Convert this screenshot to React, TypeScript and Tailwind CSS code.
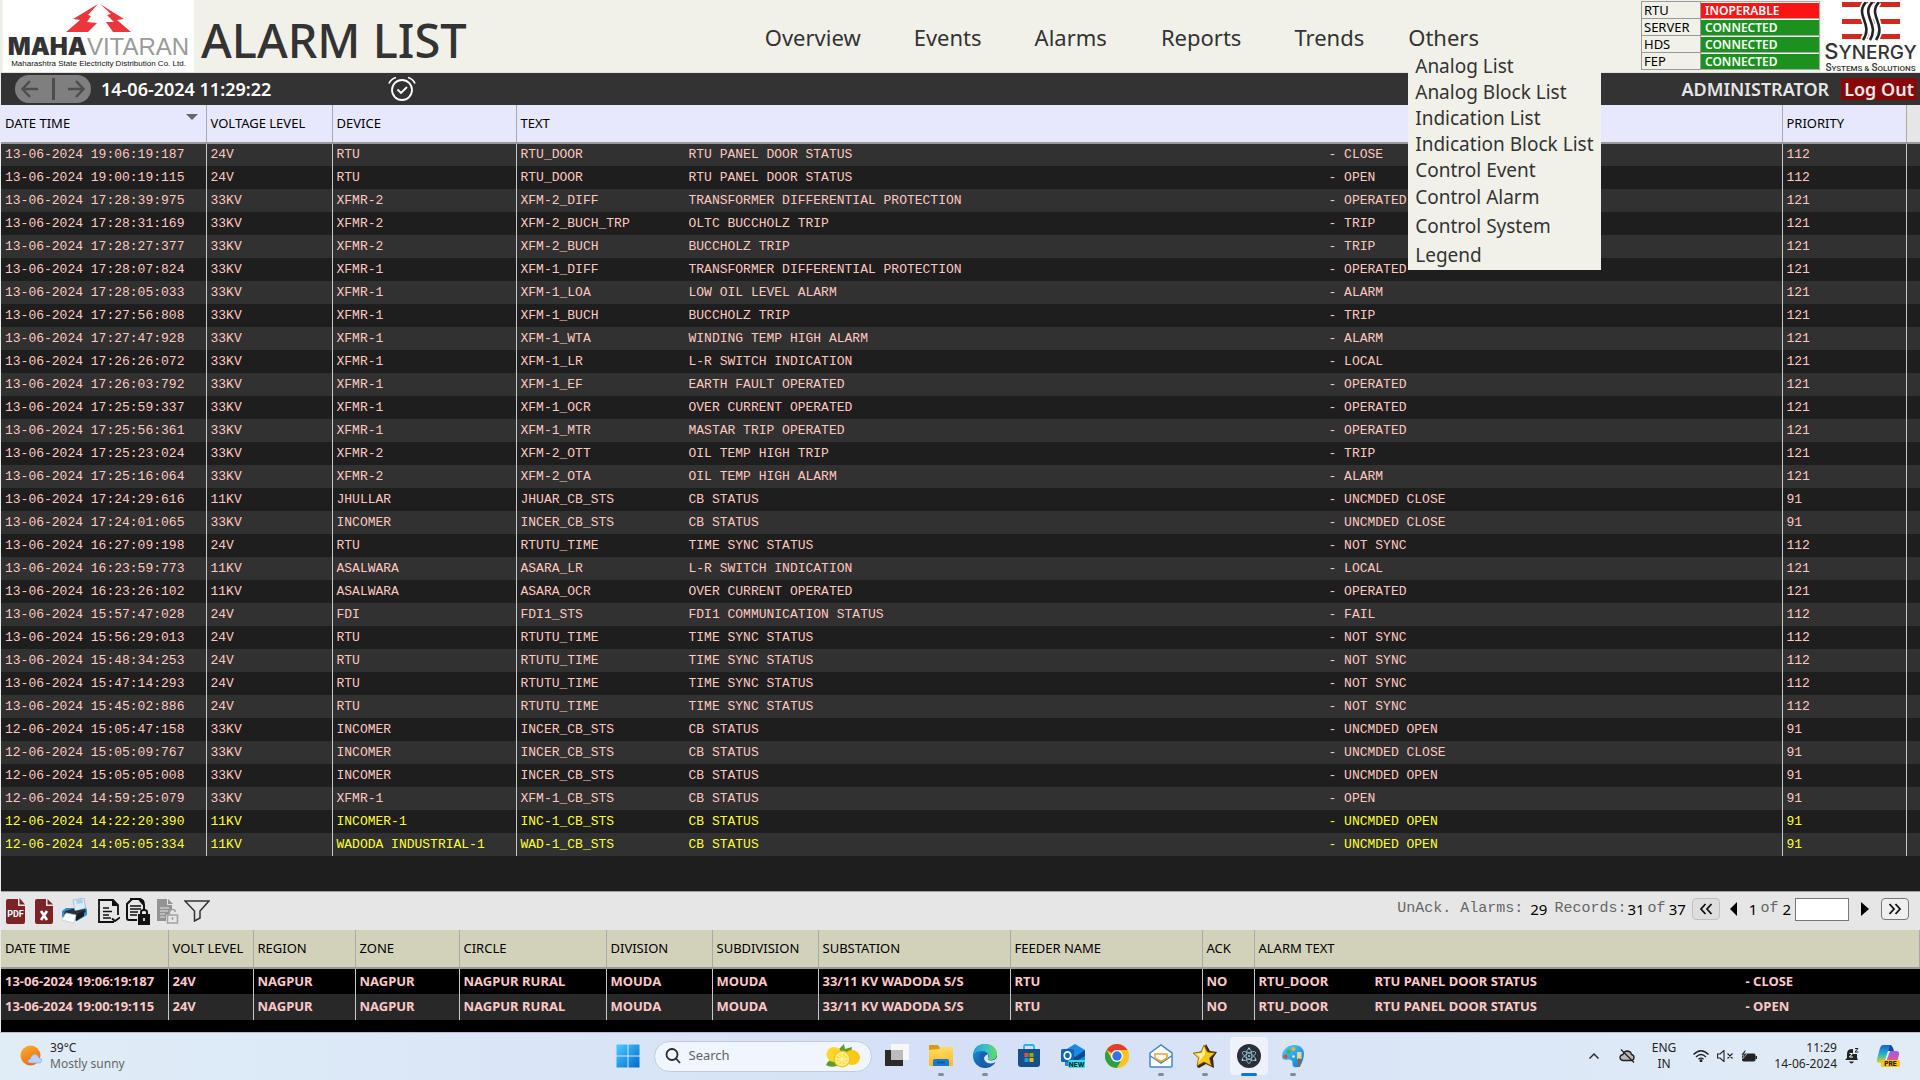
import type { ReactNode } from "react";

type Alarm = [time: string, volt: string, device: string, tag: string, desc: string, state: string, priority: string, open?: boolean];

const alarms: Alarm[] = [
  ["13-06-2024 19:06:19:187", "24V", "RTU", "RTU_DOOR", "RTU PANEL DOOR STATUS", "CLOSE", "112"],
  ["13-06-2024 19:00:19:115", "24V", "RTU", "RTU_DOOR", "RTU PANEL DOOR STATUS", "OPEN", "112"],
  ["13-06-2024 17:28:39:975", "33KV", "XFMR-2", "XFM-2_DIFF", "TRANSFORMER DIFFERENTIAL PROTECTION", "OPERATED", "121"],
  ["13-06-2024 17:28:31:169", "33KV", "XFMR-2", "XFM-2_BUCH_TRP", "OLTC BUCCHOLZ TRIP", "TRIP", "121"],
  ["13-06-2024 17:28:27:377", "33KV", "XFMR-2", "XFM-2_BUCH", "BUCCHOLZ TRIP", "TRIP", "121"],
  ["13-06-2024 17:28:07:824", "33KV", "XFMR-1", "XFM-1_DIFF", "TRANSFORMER DIFFERENTIAL PROTECTION", "OPERATED", "121"],
  ["13-06-2024 17:28:05:033", "33KV", "XFMR-1", "XFM-1_LOA", "LOW OIL LEVEL ALARM", "ALARM", "121"],
  ["13-06-2024 17:27:56:808", "33KV", "XFMR-1", "XFM-1_BUCH", "BUCCHOLZ TRIP", "TRIP", "121"],
  ["13-06-2024 17:27:47:928", "33KV", "XFMR-1", "XFM-1_WTA", "WINDING TEMP HIGH ALARM", "ALARM", "121"],
  ["13-06-2024 17:26:26:072", "33KV", "XFMR-1", "XFM-1_LR", "L-R SWITCH INDICATION", "LOCAL", "121"],
  ["13-06-2024 17:26:03:792", "33KV", "XFMR-1", "XFM-1_EF", "EARTH FAULT OPERATED", "OPERATED", "121"],
  ["13-06-2024 17:25:59:337", "33KV", "XFMR-1", "XFM-1_OCR", "OVER CURRENT OPERATED", "OPERATED", "121"],
  ["13-06-2024 17:25:56:361", "33KV", "XFMR-1", "XFM-1_MTR", "MASTAR TRIP OPERATED", "OPERATED", "121"],
  ["13-06-2024 17:25:23:024", "33KV", "XFMR-2", "XFM-2_OTT", "OIL TEMP HIGH TRIP", "TRIP", "121"],
  ["13-06-2024 17:25:16:064", "33KV", "XFMR-2", "XFM-2_OTA", "OIL TEMP HIGH ALARM", "ALARM", "121"],
  ["13-06-2024 17:24:29:616", "11KV", "JHULLAR", "JHUAR_CB_STS", "CB STATUS", "UNCMDED CLOSE", "91"],
  ["13-06-2024 17:24:01:065", "33KV", "INCOMER", "INCER_CB_STS", "CB STATUS", "UNCMDED CLOSE", "91"],
  ["13-06-2024 16:27:09:198", "24V", "RTU", "RTUTU_TIME", "TIME SYNC STATUS", "NOT SYNC", "112"],
  ["13-06-2024 16:23:59:773", "11KV", "ASALWARA", "ASARA_LR", "L-R SWITCH INDICATION", "LOCAL", "121"],
  ["13-06-2024 16:23:26:102", "11KV", "ASALWARA", "ASARA_OCR", "OVER CURRENT OPERATED", "OPERATED", "121"],
  ["13-06-2024 15:57:47:028", "24V", "FDI", "FDI1_STS", "FDI1 COMMUNICATION STATUS", "FAIL", "112"],
  ["13-06-2024 15:56:29:013", "24V", "RTU", "RTUTU_TIME", "TIME SYNC STATUS", "NOT SYNC", "112"],
  ["13-06-2024 15:48:34:253", "24V", "RTU", "RTUTU_TIME", "TIME SYNC STATUS", "NOT SYNC", "112"],
  ["13-06-2024 15:47:14:293", "24V", "RTU", "RTUTU_TIME", "TIME SYNC STATUS", "NOT SYNC", "112"],
  ["13-06-2024 15:45:02:886", "24V", "RTU", "RTUTU_TIME", "TIME SYNC STATUS", "NOT SYNC", "112"],
  ["12-06-2024 15:05:47:158", "33KV", "INCOMER", "INCER_CB_STS", "CB STATUS", "UNCMDED OPEN", "91"],
  ["12-06-2024 15:05:09:767", "33KV", "INCOMER", "INCER_CB_STS", "CB STATUS", "UNCMDED CLOSE", "91"],
  ["12-06-2024 15:05:05:008", "33KV", "INCOMER", "INCER_CB_STS", "CB STATUS", "UNCMDED OPEN", "91"],
  ["12-06-2024 14:59:25:079", "33KV", "XFMR-1", "XFM-1_CB_STS", "CB STATUS", "OPEN", "91"],
  ["12-06-2024 14:22:20:390", "11KV", "INCOMER-1", "INC-1_CB_STS", "CB STATUS", "UNCMDED OPEN", "91", true],
  ["12-06-2024 14:05:05:334", "11KV", "WADODA INDUSTRIAL-1", "WAD-1_CB_STS", "CB STATUS", "UNCMDED OPEN", "91", true],
];

const recent = [
  ["13-06-2024 19:06:19:187", "CLOSE"],
  ["13-06-2024 19:00:19:115", "OPEN"],
];

const recentCols: [string, string][] = [
  ["DATE TIME", "w-[167px]"],
  ["VOLT LEVEL", "w-[85px]"],
  ["REGION", "w-[102px]"],
  ["ZONE", "w-[104px]"],
  ["CIRCLE", "w-[147px]"],
  ["DIVISION", "w-[106px]"],
  ["SUBDIVISION", "w-[106px]"],
  ["SUBSTATION", "w-[192px]"],
  ["FEEDER NAME", "w-[192px]"],
  ["ACK", "w-[52px]"],
  ["ALARM TEXT", ""],
];

const links: [string, string][] = [
  ["RTU", "INOPERABLE"],
  ["SERVER", "CONNECTED"],
  ["HDS", "CONNECTED"],
  ["FEP", "CONNECTED"],
];

function MahavitaranLogo() {
  return (
    <div className="flex h-[72px] w-[191px] shrink-0 flex-col items-center bg-white pt-1">
      <svg width="66" height="29" viewBox="0 0 66 29" className="shrink-0" fill="#e9373b">
        <path d="M32 0 L7 15 L14 16 L0 28 L22 28 L31 19 L21 18 L25 12 L22 11 Z" />
        <path d="M34 0 L58 15 L51 16 L65 28 L47 28 L40 18 L48 18 L41 11 L45 10 Z" />
      </svg>
      <div className="flex h-[27px] items-center whitespace-nowrap leading-6">
        <span className="font-['Inter'] text-[24px] font-black text-[#333333]">MAHA</span>
        <span className="font-['Liberation_Sans'] text-[24px] text-[#9a9a9a]">VITARAN</span>
      </div>
      <div className="whitespace-nowrap font-['Liberation_Sans'] text-[8px] leading-[8px] text-[#111111]">
        Maharashtra State Electricity Distribution Co. Ltd.
      </div>
    </div>
  );
}

function SynergyLogo() {
  return (
    <div className="flex h-[72px] w-[99px] shrink-0 flex-col items-center bg-white pt-0.5">
      <svg width="58" height="39" viewBox="0 0 58 39" fill="none" className="shrink-0">
        <path d="M0 2.500H58M0 19.500H58M0 34.500H58" stroke="#cf2a20" strokeWidth="5" />
        <path d="M24 0C12 13 32 22 21 38M30.500 0C18 13 38 22 28 38M37 0C25 13 45 22 34 38" stroke="#fff" strokeWidth="6" />
        <path d="M24 0C12 13 32 22 21 38M30.500 0C18 13 38 22 28 38M37 0C25 13 45 22 34 38" stroke="#222" strokeWidth="2.600" />
      </svg>
      <div className="whitespace-nowrap font-['Inter'] text-[19px] font-medium leading-[20px] text-[#333333]">
        <span className="text-[22px]">S</span>YNERGY
      </div>
      <div className="whitespace-nowrap font-['Roboto'] text-[8px] font-medium leading-[9px] text-[#333333]">
        <span className="text-[10px]">S</span>YSTEMS &amp; <span className="text-[10px]">S</span>OLUTIONS
      </div>
    </div>
  );
}

function NavLink({ children, className }: { children: ReactNode; className: string }) {
  return (
    <a href="#" className={`${className} whitespace-nowrap text-[22px] leading-[30px]`}>
      {children}
    </a>
  );
}

function Header() {
  return (
    <header className="relative z-10 flex h-[73px] items-start border-b border-[#e2e2e2] bg-[#f1f1e9] pl-0.5 text-[#333333]">
      <MahavitaranLogo />
      <h1 className="ml-[7px] mt-2 whitespace-nowrap text-[47px] font-medium leading-[65px]">ALARM LIST</h1>
      <nav className="ml-auto mt-[22px] flex">
        <NavLink className="mr-[53px]">Overview</NavLink>
        <NavLink className="mr-[53px]">Events</NavLink>
        <NavLink className="mr-[54px]">Alarms</NavLink>
        <NavLink className="mr-[53px]">Reports</NavLink>
        <NavLink className="mr-11">Trends</NavLink>
        <div className="relative mr-[162px]">
          <NavLink className="">Others</NavLink>
          <ul className="absolute left-0 top-[31px] w-[193px] bg-[#f1f1e9] pl-[7px] text-[19px]">
            {["Analog List", "Analog Block List", "Indication List", "Indication Block List", "Control Event"].map((t) => (
              <li key={t} className="h-[26px] whitespace-nowrap leading-[26px]">
                <a href="#">{t}</a>
              </li>
            ))}
            {["Control Alarm", "Control System", "Legend"].map((t) => (
              <li key={t} className="h-[29px] whitespace-nowrap leading-[29px]">
                <a href="#">{t}</a>
              </li>
            ))}
          </ul>
        </div>
      </nav>
      <table className="mt-px w-[179px] shrink-0 table-fixed border-collapse text-[13px] leading-4 text-black">
        <tbody>
          {links.map(([name, state]) => (
            <tr key={name} className="h-[17px]">
              <th scope="row" className="w-[59px] border border-[#999999] py-0 pl-0.5 text-left font-normal">
                {name}
              </th>
              <td className="border border-[#aaaaaa] p-0 text-[12px] font-semibold text-white">
                <div className={`${state === "INOPERABLE" ? "bg-[#fb1414]" : "bg-[#1b9220]"} h-[15px] pl-1 leading-[15px]`}>{state}</div>
              </td>
            </tr>
          ))}
        </tbody>
      </table>
      <div className="ml-px">
        <SynergyLogo />
      </div>
    </header>
  );
}

function StatusBar() {
  return (
    <div className="flex h-8 shrink-0 items-center bg-[#333333] pl-3.5 pr-[3px] text-[18px] font-semibold text-[#e6e6e6]">
      <div className="flex h-7 w-[76px] items-center justify-between rounded-full bg-[#7f7f7f] px-1.5">
        <button aria-label="Back">
          <svg width="17" height="18" viewBox="0 0 17 18" fill="none" stroke="#4d4d4d" strokeWidth="2.500">
            <path d="M9 1L1.500 9L9 17M1.500 9H17" />
          </svg>
        </button>
        <span className="h-[22px] w-[3px] bg-[#4d4d4d]" />
        <button aria-label="Forward">
          <svg width="17" height="18" viewBox="0 0 17 18" fill="none" stroke="#4d4d4d" strokeWidth="2.500">
            <path d="M8 1L15.500 9L8 17M15.500 9H0" />
          </svg>
        </button>
      </div>
      <time className="ml-2.5 w-[287px] whitespace-nowrap text-white">14-06-2024 11:29:22</time>
      <button aria-label="Acknowledge alarms">
        <svg width="28" height="26" viewBox="0 0 28 26" fill="none" stroke="#fff" strokeWidth="1.800">
          <circle cx="14" cy="14" r="10" />
          <path d="M9.500 13.500L13 17L19 11M1 7.500Q3 3 8 1.500M20 1.500Q25 3 27 7.500" />
        </svg>
      </button>
      <span className="ml-auto mr-3">ADMINISTRATOR</span>
      <button className="h-[22px] whitespace-nowrap bg-[#880808] px-[3px] leading-[22px]">Log Out</button>
    </div>
  );
}

function AlarmTable() {
  const head = "border-r border-[#a9a9a9] p-0 pl-1 text-left font-normal";
  const cell = "border-r border-[#c8c8c8] p-0 pl-1";
  return (
    <main className="flex-1 bg-[#1e1e1e]">
      <table className="w-full table-fixed border-collapse">
        <thead className="text-[13px] text-black">
          <tr className="h-[38px] border-b-2 border-[#999999] bg-[#e7e8fd]">
            <th className={`${head} w-[205px]`} aria-sort="descending">
              <div className="flex justify-between pr-2">
                DATE TIME
                <svg width="12" height="6" viewBox="0 0 12 6">
                  <path d="M0 0H12L6 6Z" fill="#666" />
                </svg>
              </div>
            </th>
            <th className={`${head} w-[126px]`}>VOLTAGE LEVEL</th>
            <th className={`${head} w-[184px]`}>DEVICE</th>
            <th className={head}>TEXT</th>
            <th className={`${head} w-[124px]`}>PRIORITY</th>
            <th className="w-[14px] bg-[#e6e6e6] p-0" aria-label="Scroll" />
          </tr>
        </thead>
        <tbody className="whitespace-pre font-['Liberation_Mono',monospace] text-[13px] leading-[22px]">
          {alarms.map(([time, volt, device, tag, desc, state, priority, open]) => (
            <tr key={time} className={`${open ? "text-[#ffff33]" : "text-[#ffc8c0]"} h-[23px] odd:bg-[#313131]`}>
              <td className={cell}>{time}</td>
              <td className={cell}>{volt}</td>
              <td className={cell}>{device}</td>
              <td className={cell}>
                <div className="flex">
                  <span className="w-[168px]">{tag}</span>
                  <span className="w-[640px]">{desc}</span>
                  <span>- {state}</span>
                </div>
              </td>
              <td className={cell}>{priority}</td>
              <td className="p-0" />
            </tr>
          ))}
        </tbody>
      </table>
    </main>
  );
}

function Toolbar() {
  const mono = "font-['Liberation_Mono',monospace] text-[#666666]";
  return (
    <div className="flex h-[39px] shrink-0 items-center border-t border-[#a0a0a0] bg-[#e6e6e6] pl-[5px] pr-[11px] text-[15px] text-black">
      <button aria-label="Export PDF" className="mr-2.5">
        <svg width="19" height="26" viewBox="0 0 19 26">
          <path d="M2 1H12V8H19V24Q19 26 17 26H2Q0 26 0 24V3Q0 1 2 1ZM13.500 0L19 6.500H13.500Z" fill="#7b2428" />
          <text x="9.500" y="19" textAnchor="middle" fill="#fff" fontFamily="Roboto" fontWeight="700" fontSize="9">PDF</text>
        </svg>
      </button>
      <button aria-label="Export Excel" className="mr-2">
        <svg width="18" height="26" viewBox="0 0 18 26">
          <path d="M2 1H11V8H18V24Q18 26 16 26H2Q0 26 0 24V3Q0 1 2 1ZM12.500 1L18 6.500H12.500Z" fill="#7b2428" />
          <path d="M6 13L12 22M12 13L6 22" stroke="#fff" strokeWidth="2.600" />
        </svg>
      </button>
      <button aria-label="Print" className="mr-2.5">
        <svg width="27" height="26" viewBox="0 0 27 26">
          <path d="M12 2L23 0L25 12L14 14Z" fill="#dcecf6" stroke="#9ab8cc" strokeWidth="0.800" />
          <path d="M15 2L21 1L22 5L16 6Z" fill="#a8d0ea" />
          <path d="M1 13L5 10L13 10V13L25 10L26 12V17L16 23L1 19Z" fill="#2f8fd6" />
          <path d="M4 13L13 10.500L14 13L24 11L25 14L16 18L3 16Z" fill="#2a3039" />
          <path d="M15 17L23 13V18L15 23Z" fill="#181d24" />
          <path d="M5 15L15 17L13 25L1 22Z" fill="#fff" stroke="#b9c9d4" strokeWidth="0.700" />
        </svg>
      </button>
      <button aria-label="Acknowledge page" className="mr-1.5">
        <svg width="22" height="25" viewBox="0 0 22 25" fill="none" stroke="#111" strokeWidth="1.800">
          <path d="M20 16V6L15 1H1V23H16" />
          <path d="M14 0L21 7H14Z" fill="#111" stroke="none" />
          <path d="M5 9H11M5 12.500H14M5 16H11M5 19H13" strokeWidth="1.500" />
          <path d="M14 19.500L17 22L22 18.500" />
        </svg>
      </button>
      <button aria-label="Lock list" className="mr-[7px]">
        <svg width="24" height="27" viewBox="0 0 24 27" fill="none" stroke="#111" strokeWidth="2">
          <path d="M18 12V7L13 1H6L1 6V20Q1 22 3 22H11M4 1H14Q18 2 18 7" />
          <path d="M4 8H15M4 11H15M4 14H12M4 17H11" strokeWidth="1.500" />
          <path d="M13 17H23V26H13Z" fill="#111" />
          <path d="M15 17V14Q15 12 18 12T21 14V17" />
          <path d="M18 20V23" stroke="#fff" strokeWidth="1.500" />
        </svg>
      </button>
      <button aria-label="Unlock list" className="mr-[5px]">
        <svg width="22" height="25" viewBox="0 0 22 25">
          <path d="M0 0H10V6H15V10L12 12V15L9 16V22H0Z" fill="#939393" />
          <path d="M11 0L16 5H11Z" fill="#939393" />
          <path d="M3 9H12M3 12H11M3 15H8M3 18H8" stroke="#e6e6e6" strokeWidth="1.200" />
          <path d="M10.500 16H20.500V24H10.500ZM12.500 16V13Q13 10.500 15.500 10.500T18.500 13" fill="none" stroke="#a2a2a2" strokeWidth="1.600" />
          <path d="M15.500 18V21" stroke="#a2a2a2" strokeWidth="1.500" />
        </svg>
      </button>
      <button aria-label="Filter">
        <svg width="26" height="22" viewBox="0 0 26 22" fill="none" stroke="#333" strokeWidth="1.500">
          <path d="M1 1H25L16 11V18L10.500 21V11Z" />
        </svg>
      </button>

      <div className="mb-1 ml-auto flex items-center whitespace-nowrap">
        <span className={mono}>UnAck. Alarms:</span>
        <span className="ml-[7px]">29</span>
        <span className={`${mono} ml-[7px]`}>Records:</span>
        <span className="ml-px">31</span>
        <span className={`${mono} ml-[3px]`}>of</span>
        <span className="ml-[3px]">37</span>
        <button aria-label="First page" className="ml-1.5 flex h-[22px] w-7 items-center justify-center rounded-sm border border-[#c0c0c0] bg-[#dedede]">
          <svg width="14" height="12" viewBox="0 0 14 12" fill="none" stroke="#111" strokeWidth="1.800">
            <path d="M6.500 1L2 6L6.500 11M12.500 1L8 6L12.500 11" />
          </svg>
        </button>
        <button aria-label="Previous page" className="ml-2.5">
          <svg width="7" height="14" viewBox="0 0 7 14"><path d="M7 0V14L0 7Z" /></svg>
        </button>
        <span className="ml-3">1</span>
        <span className={`${mono} ml-[3px]`}>of</span>
        <span className="ml-1">2</span>
        <input aria-label="Go to page" className="ml-1 h-[23px] w-[54px] border border-[#777777] bg-white px-1" />
        <button aria-label="Next page" className="ml-3">
          <svg width="8" height="14" viewBox="0 0 8 14"><path d="M0 0V14L8 7Z" /></svg>
        </button>
        <button aria-label="Last page" className="ml-3 flex h-[22px] w-7 items-center justify-center rounded-sm border border-[#777777] bg-[#efefef]">
          <svg width="14" height="12" viewBox="0 0 14 12" fill="none" stroke="#111" strokeWidth="1.800">
            <path d="M1.500 1L6 6L1.500 11M7.500 1L12 6L7.500 11" />
          </svg>
        </button>
      </div>
    </div>
  );
}

function RecentTable() {
  return (
    <section className="h-[102px] shrink-0 bg-black">
      <table className="w-full table-fixed border-collapse text-[13px]">
        <thead className="text-black">
          <tr className="h-[38px] border-b-2 border-[#999999] bg-[#d2d2bb]">
            {recentCols.map(([name, width]) => (
              <th key={name} className={`${width} border-r border-[#a9a9a9] p-0 pl-1 text-left font-normal`}>
                {name}
              </th>
            ))}
          </tr>
        </thead>
        <tbody className="whitespace-nowrap font-bold text-[#ffc8c8]">
          {recent.map(([time, state]) => (
            <tr key={time} className="h-[26px] even:bg-[#282828]">
              {[time, "24V", "NAGPUR", "NAGPUR", "NAGPUR RURAL", "MOUDA", "MOUDA", "33/11 KV WADODA S/S", "RTU", "NO"].map((value, i) => (
                <td key={i} className="border-r border-[#c8c8c8] p-0 pl-1">
                  {value}
                </td>
              ))}
              <td className="p-0 pl-1">
                <div className="flex">
                  <span className="w-[116px]">RTU_DOOR</span>
                  <span className="w-[371px]">RTU PANEL DOOR STATUS</span>
                  <span>- {state}</span>
                </div>
              </td>
            </tr>
          ))}
        </tbody>
      </table>
    </section>
  );
}

function TaskButton({ label, running, active, children }: { label: string; running?: boolean; active?: boolean; children: ReactNode }) {
  return (
    <button aria-label={label} className="relative flex h-[46px] w-11 items-center justify-center">
      {active && <span className="absolute inset-x-[3px] inset-y-1 rounded-[4px] bg-[#eef2fb]" />}
      <svg width="24" height="24" viewBox="0 0 24 24" className="relative">
        {children}
      </svg>
      {running && <span className="absolute bottom-[3px] h-[3px] w-1.5 rounded-full bg-[#858a96]" />}
      {active && <span className="absolute bottom-[3px] h-[3px] w-4 rounded-full bg-[#0b78d4]" />}
    </button>
  );
}

function Taskbar() {
  return (
    <footer className="grid h-12 shrink-0 grid-cols-[1fr_auto_1fr] items-center border-t border-[#b9bdc6] bg-linear-to-r from-[#e0edf7] via-[#d5e0f7] to-[#e2ecf7] pb-px text-[12px] text-[#1f1f1f]">
      <svg width="0" height="0" className="absolute">
        <defs>
          <linearGradient id="win" x1="0" y1="0" x2="1" y2="1"><stop stopColor="#4ccbff" /><stop offset="1" stopColor="#0069cf" /></linearGradient>
          <linearGradient id="sun" x1="0" y1="0" x2="0.500" y2="1"><stop stopColor="#f9b62b" /><stop offset="1" stopColor="#ee6a12" /></linearGradient>
          <linearGradient id="folder" x1="0" y1="0" x2="0" y2="1"><stop stopColor="#ffdc63" /><stop offset="1" stopColor="#fbb826" /></linearGradient>
          <linearGradient id="edgeTop" x1="0" y1="0" x2="1" y2="0"><stop stopColor="#1f9fd8" /><stop offset="0.500" stopColor="#35c1c8" /><stop offset="1" stopColor="#6bdc50" /></linearGradient>
          <linearGradient id="edgeLow" x1="0" y1="0" x2="1" y2="1"><stop stopColor="#1b94de" /><stop offset="1" stopColor="#0f3f86" /></linearGradient>
          <linearGradient id="copA" x1="0" y1="0" x2="0" y2="1"><stop stopColor="#1b62d8" /><stop offset="0.500" stopColor="#22b2c8" /><stop offset="1" stopColor="#e8d429" /></linearGradient>
          <linearGradient id="copB" x1="0" y1="0" x2="0" y2="1"><stop stopColor="#9a5cf0" /><stop offset="1" stopColor="#f2567a" /></linearGradient>
          <linearGradient id="paint" x1="0" y1="0" x2="1" y2="1"><stop stopColor="#46d1fa" /><stop offset="1" stopColor="#1776d0" /></linearGradient>
        </defs>
      </svg>
      <button className="ml-5 flex items-center gap-2 justify-self-start text-left leading-4">
        <svg width="22" height="22" viewBox="0 0 22 22">
          <circle cx="10.500" cy="10.500" r="10" fill="url(#sun)" />
          <path d="M10 18Q7.500 18 8 15.500Q8.500 14 10.500 14Q11 9.500 15 9.500Q18 9.500 19 13Q22 13.500 22 16Q21.500 18 19 18Z" fill="#bcd2f7" stroke="#88aeea" strokeWidth="0.700" />
        </svg>
        <span>
          39°C
          <span className="block text-[#666666]">Mostly sunny</span>
        </span>
      </button>

      <div className="flex items-center">
        <TaskButton label="Start">
          <path d="M0.500 0.500H11.500V11.500H0.500ZM12.500 0.500H23.500V11.500H12.500ZM0.500 12.500H11.500V23.500H0.500ZM12.500 12.500H23.500V23.500H12.500Z" fill="url(#win)" />
        </TaskButton>
        <label className="ml-1 mr-[3px] flex h-[31px] w-[218px] items-center rounded-full border border-[#c3cbe0] bg-[#f1f5fd] px-2.5">
          <svg width="16" height="16" viewBox="0 0 16 16" fill="none" stroke="#2b2b2b" strokeWidth="1.800">
            <circle cx="7" cy="6.500" r="5.500" />
            <path d="M11 10.500L15 15" />
          </svg>
          <input type="search" placeholder="Search" className="ml-2 w-0 min-w-0 flex-1 bg-transparent text-[13px] outline-none placeholder:text-[#5f6368]" />
          <svg width="36" height="24" viewBox="0 0 36 24">
            <path d="M1 21Q3 15 11 15L12 22Q5 24 1 21ZM14 5L19 0L20 5L27 3L26 9L16 9Z" fill="#5d9c2c" />
            <circle cx="9" cy="10.500" r="7.500" fill="#ffd62b" />
            <ellipse cx="27" cy="13.500" rx="8" ry="7.500" fill="#fbc816" />
            <circle cx="17" cy="15" r="8.500" fill="#f6c51b" />
            <circle cx="17" cy="15" r="7" fill="#fff4a8" />
            <circle cx="17" cy="15" r="6" fill="#ffe14a" />
            <path d="M17 9V21M11 15H23M13 11L21 19M21 11L13 19" stroke="#fff7c2" strokeWidth="0.900" />
          </svg>
        </label>
        <TaskButton label="Task view">
          <rect x="6" y="0" width="18" height="16" fill="#f7f7f7" />
          <rect x="0" y="6" width="18" height="16" fill="#2b2b2b" />
          <rect x="6" y="6" width="12" height="10" fill="#bcbcbc" />
        </TaskButton>
        <TaskButton label="File Explorer" running>
          <path d="M0 2Q0 1 1 1H9L11 4H24V9H0Z" fill="#dc9a10" />
          <path d="M0 6L10 5L12 3H23Q24 3 24 4V21Q24 22 23 22H1Q0 22 0 21Z" fill="url(#folder)" />
          <path d="M4 22V17Q4 15 6 15H18Q20 15 20 17V22Z" fill="#1679cf" />
          <path d="M8 18.500H16" stroke="#0c5298" strokeWidth="1.500" />
        </TaskButton>
        <TaskButton label="Edge" running>
          <circle cx="12" cy="12" r="12" fill="url(#edgeLow)" />
          <path d="M0 11Q1 0 12 0Q23 0 24 10Q24 15.500 18 16Q14.500 16 14.500 14Q16 13.500 15.500 11Q14 7 9 7Q3 7 0 11Z" fill="url(#edgeTop)" />
          <path d="M15 10Q10 11 10.500 15Q12 20 18 20Q21 20 23 18Q24 17 24 13Q22 16.500 18 16.500Q14 16 15 14Z" fill="#dbe4f6" />
          <path d="M8 9Q5 13 8 18Q11 23.500 17 22.500Q21 21 22.500 18Q16 21.500 12 17Q9 13 15 10Q12 7.500 8 9Z" fill="#1a5fae" />
        </TaskButton>
        <TaskButton label="Microsoft Store">
          <path d="M7 6V2.500Q7 1 8.500 1H15.500Q17 1 17 2.500V6" fill="none" stroke="#23b3ee" strokeWidth="1.800" />
          <path d="M1 5H23V20Q23 23 20 23H4Q1 23 1 20Z" fill="#174f8c" />
          <path d="M7.500 9H11.500V13H7.500Z" fill="#f25022" /><path d="M12.500 9H16.500V13H12.500Z" fill="#7fba00" />
          <path d="M7.500 14H11.500V18H7.500Z" fill="#00a4ef" /><path d="M12.500 14H16.500V18H12.500Z" fill="#ffb900" />
        </TaskButton>
        <TaskButton label="Outlook">
          <path d="M4 6L14 0L24 6V22H4Z" fill="#1d8ae0" />
          <path d="M4 6L14 13L24 6V12L14 18Z" fill="#0d4a94" />
          <rect x="0" y="5" width="13" height="13" rx="1.500" fill="#0f62bd" />
          <ellipse cx="6.500" cy="11.500" rx="3.200" ry="3.600" fill="none" stroke="#fff" strokeWidth="1.800" />
          <rect x="7.500" y="16" width="16.500" height="8" fill="#38e0e4" />
          <text x="15.700" y="22.700" textAnchor="middle" fontFamily="Inter" fontWeight="800" fontSize="6.500" fill="#08303a">NEW</text>
        </TaskButton>
        <TaskButton label="Chrome">
          <circle cx="12" cy="12" r="12" fill="#f9c71b" />
          <path d="M12 12L1.600 6A12 12 0 0 1 22.400 6H12Z" fill="#e33b2e" />
          <path d="M1.600 6A12 12 0 0 0 12 24L17.200 15L12 12L6.800 15Z" fill="#2c9f48" />
          <path d="M12 6H22.400A12 12 0 0 1 12 24L17.200 15Z" fill="#f9c71b" />
          <circle cx="12" cy="12" r="6" fill="#fff" /><circle cx="12" cy="12" r="4.700" fill="#2f74e8" />
        </TaskButton>
        <TaskButton label="Mail" running>
          <path d="M1 9L12 1L23 9V22Q23 23 22 23H2Q1 23 1 22Z" fill="#fff" stroke="#3f87c9" strokeWidth="1.500" />
          <path d="M1.500 12L12 19L22.500 12" fill="none" stroke="#3f87c9" strokeWidth="1.500" />
          <path d="M6 14V10H18V14L12 17.500Z" fill="#fff" stroke="#f0a52c" strokeWidth="1.600" />
        </TaskButton>
        <TaskButton label="Star" running>
          <path d="M13 0L17 7L24 8L20 14L21 24L13 20L6 24L4 23L7 15L2 9L10 7Z" fill="#3b2b14" />
          <path d="M11 1L14.500 8L22 9L16.500 14L18.500 22L11 18L4 22L5.500 14L0 9L8 8Z" fill="#f9c922" stroke="#7a5207" strokeWidth="0.700" />
          <path d="M11 3L12 10L5 19L7 13L3 10L9 9Z" fill="#fff3a0" />
        </TaskButton>
        <TaskButton label="SCADA client" active>
          <circle cx="12" cy="12" r="12" fill="#2b2e3a" />
          <g fill="none" stroke="#a7dfe6" strokeWidth="0.700">
            <ellipse cx="12" cy="12" rx="7.500" ry="2.800" transform="rotate(30 12 12)" />
            <ellipse cx="12" cy="12" rx="7.500" ry="2.800" transform="rotate(-30 12 12)" />
            <ellipse cx="12" cy="12" rx="7.500" ry="2.800" transform="rotate(90 12 12)" />
          </g>
          <circle cx="12" cy="12" r="1" fill="#a7dfe6" /><circle cx="5.500" cy="16" r="1" fill="#a7dfe6" /><circle cx="18.500" cy="16" r="1" fill="#a7dfe6" /><circle cx="12" cy="4.500" r="1" fill="#a7dfe6" />
        </TaskButton>
        <TaskButton label="Paint" running>
          <path d="M13 1Q22 1 23 9Q23 16 19 22Q16 24 13 23Q11 22 11.500 18Q11 15 7 15.500Q1 17 1 12Q2 2 13 1Z" fill="url(#paint)" />
          <circle cx="4.500" cy="12.500" r="2" fill="#e5482e" /><circle cx="7.500" cy="7.500" r="2" fill="#4fae3a" /><circle cx="12.500" cy="5" r="2" fill="#f4b41c" />
          <circle cx="12.500" cy="12.500" r="1.300" fill="#e6f6ff" />
          <path d="M16 8H20.500V15H16Z" fill="#e9d3a4" /><path d="M17 14.500H19.500L19.200 23H17.300Z" fill="#a35c22" />
        </TaskButton>
      </div>

      <div className="flex items-center justify-self-end pr-5 leading-4">
        <button aria-label="Show hidden icons" className="mr-5">
          <svg width="10" height="6" viewBox="0 0 10 6" fill="none" stroke="#222" strokeWidth="1.400"><path d="M0.500 5.500L5 1L9.500 5.500" /></svg>
        </button>
        <button aria-label="OneDrive" className="mr-[17px]">
          <svg width="16" height="14" viewBox="0 0 16 14" fill="#b8b8b8" stroke="#222" strokeWidth="1.300">
            <path d="M4 11.500Q1 11 1 8.500Q1 6 4 5.500Q5 2 8.500 2Q12 2.500 12.500 5.500Q15 6 15 8.500Q15 11.500 12 11.500Z" />
            <path d="M2 0.500L15 13.500" />
          </svg>
        </button>
        <button className="mr-[17px] text-center">ENG<br />IN</button>
        <button aria-label="Network, sound and battery" className="mr-[17px] flex items-center gap-2">
          <svg width="16" height="12" viewBox="0 0 16 12" fill="none" stroke="#222" strokeWidth="1.300">
            <path d="M0.500 4.500Q8 -3 15.500 4.500M3 7Q8 2 13 7M5.500 9.300Q8 7 10.500 9.300" /><circle cx="8" cy="10.800" r="0.800" fill="#222" />
          </svg>
          <svg width="16" height="12" viewBox="0 0 16 12" fill="none" stroke="#222" strokeWidth="1.100">
            <path d="M0.500 4V8H3L7 11.500V0.500L3 4ZM10.500 3.500L15.500 8.500M15.500 3.500L10.500 8.500" />
          </svg>
          <svg width="16" height="12" viewBox="0 0 16 12">
            <path d="M2 4H13Q14 4 14 5V10Q14 11 13 11H2.500Q1.500 11 1.500 10V7Z" fill="#222" stroke="#222" /><path d="M14.500 6H16V9H14.500Z" fill="#222" />
            <path d="M4 0L0 5H3L1.500 9L6 4H3.500L5 0Z" fill="#222" stroke="#e2ecf7" strokeWidth="0.500" />
          </svg>
        </button>
        <button className="mr-2 text-right">11:29<br />14-06-2024</button>
        <button aria-label="Notifications" className="mr-[17px]">
          <svg width="14" height="16" viewBox="0 0 14 16" fill="#222">
            <path d="M2 6Q2 1 7 1H8V6H12V10L13 12H0L2 10Z" /><path d="M4 13.500H9Q8 15.500 6.500 15.500T4 13.500Z" />
            <path d="M10 0.500H13L10 4H13.500" fill="none" stroke="#222" /><path d="M4.500 5.500H7.500L4.500 9H8" fill="none" stroke="#fff" />
          </svg>
        </button>
        <button aria-label="Copilot">
          <svg width="24" height="24" viewBox="0 0 24 24">
            <path d="M7 1H15L12 7L8 19H3Q0 19 1 15L4 4Q5 1 7 1Z" fill="url(#copA)" />
            <path d="M14 1Q16 1 17 4L18 7H12Z" fill="#1546b0" />
            <path d="M14 7H20Q24 7 23 11L21 18H10Z" fill="url(#copB)" />
            <rect x="5" y="16" width="19" height="7" rx="1.500" fill="#fdc412" />
            <text x="14.500" y="22" textAnchor="middle" fontFamily="Inter" fontWeight="800" fontSize="6.500" fill="#222">PRE</text>
          </svg>
        </button>
      </div>
    </footer>
  );
}

export default function App() {
  return (
    <div className="flex min-h-screen flex-col bg-[#e8eaee] font-['Noto_Sans',sans-serif]">
      <div className="flex flex-1 flex-col pl-px">
        <Header />
        <StatusBar />
        <AlarmTable />
        <Toolbar />
        <RecentTable />
      </div>
      <Taskbar />
    </div>
  );
}
